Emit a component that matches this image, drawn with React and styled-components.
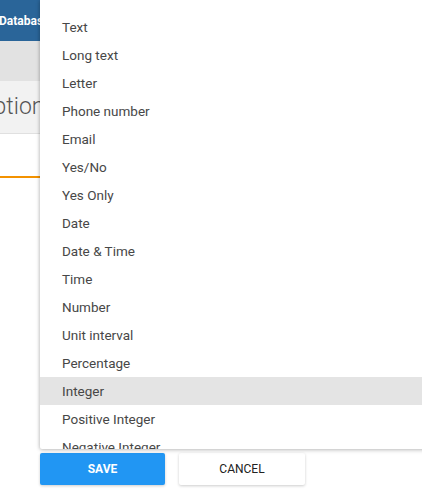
import React from 'react';
import styled, { createGlobalStyle } from 'styled-components';

const Global = createGlobalStyle`
  html, body { margin: 0; padding: 0; background: #fff; }
  body { font-family: Roboto, "Liberation Sans", sans-serif; overflow: hidden; }
`;

const Page = styled.div`
  position: relative;
  width: 422px;
  height: 501px;
  display: flex;
  flex-direction: column;
  overflow: hidden;
`;

const Header = styled.div`
  height: 41px;
  background: #2a6599;
  display: flex;
  align-items: center;
  overflow: hidden;
  white-space: nowrap;
`;

const HeaderTitle = styled.span`
  color: #fff;
  font-size: 12px;
  font-weight: 700;
  margin-left: -1px;
`;

const Toolbar = styled.div`
  height: 40px;
  background: #e2e2e2;
`;

const TitleBar = styled.div`
  height: 52px;
  background: #f2f2f2;
  border-bottom: 1px solid #e0e0e0;
  display: flex;
  align-items: center;
  overflow: hidden;
  white-space: nowrap;
`;

const Title = styled.span`
  font-size: 23px;
  font-weight: 300;
  color: #555;
  margin-left: -22px;
  margin-top: -2px;
`;

const Tabs = styled.div`
  height: 44px;
  display: flex;
  align-items: flex-end;
`;

const TabIndicator = styled.div`
  width: 40px;
  height: 2px;
  background: #f39200;
`;

const Spacer = styled.div`
  flex: 1;
`;

const Actions = styled.div`
  display: flex;
  gap: 14px;
  padding: 0 0 16px 40px;
`;

const Button = styled.button`
  width: ${p => p.$w}px;
  height: 32px;
  border: none;
  border-radius: 2px;
  font-family: Roboto, "Liberation Sans", sans-serif;
  font-size: 12px;
  font-weight: ${p => (p.$primary ? 700 : 400)};
  background: ${p => (p.$primary ? '#2196f3' : '#fff')};
  color: ${p => (p.$primary ? '#fff' : '#222')};
  box-shadow: 0 1px 3px rgba(0, 0, 0, 0.2);
  padding: 0;
`;

const Menu = styled.ul`
  position: absolute;
  left: 40px;
  top: 0;
  width: 390px;
  height: 449px;
  margin: 0;
  padding: 13px 0 0;
  list-style: none;
  background: #fff;
  border-radius: 0 0 2px 2px;
  box-shadow: 0 1px 4px rgba(0, 0, 0, 0.25), -1px 0 3px rgba(0, 0, 0, 0.08);
  overflow: hidden;
  box-sizing: border-box;
`;

const Item = styled.li`
  height: 28px;
  line-height: 28px;
  padding-left: 22px;
  font-size: 13.5px;
  color: #474747;
  background: ${p => (p.$active ? '#e4e4e4' : 'transparent')};
`;

const types = [
  'Text', 'Long text', 'Letter', 'Phone number', 'Email', 'Yes/No', 'Yes Only',
  'Date', 'Date & Time', 'Time', 'Number', 'Unit interval', 'Percentage',
  'Integer', 'Positive Integer', 'Negative Integer',
];

export default function App() {
  return (
    <Page>
      <Global />
      <Header><HeaderTitle>Database</HeaderTitle></Header>
      <Toolbar />
      <TitleBar><Title>Options</Title></TitleBar>
      <Tabs><TabIndicator /></Tabs>
      <Spacer />
      <Actions>
        <Button $primary $w={125}>SAVE</Button>
        <Button $w={126}>CANCEL</Button>
      </Actions>
      <Menu>
        {types.map(t => (
          <Item key={t} $active={t === 'Integer'}>{t}</Item>
        ))}
      </Menu>
    </Page>
  );
}
